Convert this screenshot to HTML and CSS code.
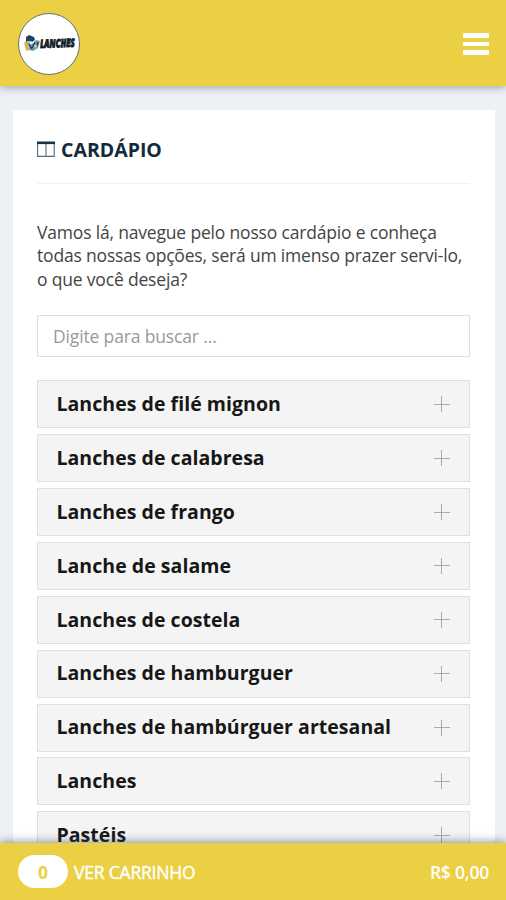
FILE: index.html
```html
<!DOCTYPE html>
<html lang="pt-BR">
<head>
<meta charset="utf-8">
<title>Cardápio</title>
<link rel="stylesheet" href="styles.css">
</head>
<body>
<div class="app">
<header class="header">
  <div class="logo">
    <svg class="mascot" viewBox="0 0 17 19" aria-hidden="true">
      <path d="M1 9 3 7l3 1-1 4 1 4-3 1-1-5z" fill="#d3b34a"/>
      <path d="M3 3 6 1l5 2 1 3-3 2-4-1-2 1z" fill="#174568"/>
      <path d="M5 9l3-2 2 3 3-4 4 1-2 7-5 3-4-1z" fill="#6f9fb8"/>
      <path d="M6 10l3 5M12 8l-3 6M15 8l-1 4" fill="none" stroke="#18384b" stroke-width="1.3"/>
      <circle cx="8" cy="9" r="1.4" fill="#eef4e9"/>
      <circle cx="12.500" cy="12" r="1.2" fill="#e6dfa8"/>
    </svg>
    <span class="logo-name">LANCHES</span>
  </div>
  <div class="menu"><i></i><i></i><i></i></div>
</header>
<main class="card">
  <h1 class="title">
    <svg class="columns" viewBox="0 0 18 16" aria-hidden="true"><path d="M.6 2v13.4h16.600V2M9 2v13" fill="none" stroke="#5c6872" stroke-width="1.1"/><path d="M0 .5h18v2.600H0z" fill="#173347"/></svg>
    <span>CARDÁPIO</span>
  </h1>
  <p class="intro">Vamos lá, navegue pelo nosso cardápio e conheça<br>todas nossas opções, será um imenso prazer servi-lo,<br>o que você deseja?</p>
  <input class="search" type="text" placeholder="Digite para buscar ...">
  <ul class="list">
    <li class="item"><span>Lanches de filé mignon</span><b class="plus"></b></li>
    <li class="item"><span>Lanches de calabresa</span><b class="plus"></b></li>
    <li class="item"><span>Lanches de frango</span><b class="plus"></b></li>
    <li class="item"><span>Lanche de salame</span><b class="plus"></b></li>
    <li class="item"><span>Lanches de costela</span><b class="plus"></b></li>
    <li class="item"><span>Lanches de hamburguer</span><b class="plus"></b></li>
    <li class="item"><span>Lanches de hambúrguer artesanal</span><b class="plus"></b></li>
    <li class="item"><span>Lanches</span><b class="plus"></b></li>
    <li class="item"><span>Pastéis</span><b class="plus"></b></li>
  </ul>
</main>
<footer class="cart">
  <span class="count">0</span>
  <span class="cart-label">VER CARRINHO</span>
  <span class="total">R$ 0,00</span>
</footer>
</div>
</body>
</html>
```
FILE: styles.css
```css
* { box-sizing: border-box; }
body {
  margin: 0;
  font-family: "Open Sans", sans-serif;
}
.app {
  display: flex;
  flex-direction: column;
  height: 900px;
  overflow: hidden;
  background: #edf0f4;
}
.header {
  flex: none;
  display: flex;
  align-items: center;
  justify-content: space-between;
  height: 86px;
  padding: 1px 17px 0 18px;
  background: #ebd044;
  box-shadow: 0 1px 8px rgba(60, 70, 95, .5);
  z-index: 1;
}
.logo {
  display: flex;
  align-items: center;
  width: 62px;
  height: 62px;
  padding-left: 4px;
  border: 1.5px solid #67706b;
  border-radius: 50%;
  background: #fff;
}
.mascot {
  flex: none;
  width: 17px;
  height: 19px;
}
.logo-name {
  font: italic 900 11.5px "Open Sans", sans-serif;
  color: #102027;
  -webkit-text-stroke: .9px #102027;
  transform: rotate(-2deg) scaleX(.68);
  transform-origin: left center;
}
.menu {
  display: flex;
  flex-direction: column;
  gap: 4px;
  padding-top: 1px;
}
.menu i {
  width: 26px;
  height: 4.7px;
  border-radius: 1px;
  background: #fff;
}
.card {
  flex: 1;
  min-height: 0;
  overflow: hidden;
  margin: 24px 11.5px 0 12.5px;
  padding: 0 25px 0 24.5px;
  background: #fff;
}
.title {
  display: flex;
  align-items: center;
  gap: 6px;
  height: 73.5px;
  margin: 0;
  padding-top: 6px;
  border-bottom: 1.5px solid #f0f1f2;
  font-size: 19.5px;
  font-weight: 700;
  color: #142a3a;
}
.columns {
  width: 18px;
  height: 16px;
}
.intro {
  margin: 37.5px 0 23.5px;
  font-size: 17.5px;
  line-height: 23.4px;
  letter-spacing: -.18px;
  color: #444;
  white-space: nowrap;
}
.search {
  display: block;
  width: 100%;
  height: 42px;
  padding: 0 15px;
  border: 1.5px solid #dcdfe2;
  background: #fff;
  font: 17.5px "Open Sans", sans-serif;
  letter-spacing: -.15px;
}
.search::placeholder {
  color: #999;
  opacity: 1;
}
.list {
  display: flex;
  flex-direction: column;
  gap: 5.9px;
  margin: 23.5px 0 0;
  padding: 0;
  list-style: none;
}
.item {
  flex: none;
  display: flex;
  align-items: center;
  justify-content: space-between;
  height: 48px;
  padding: 0 19px 0 18.5px;
  border: 1px solid #dfdfdf;
  background: #f4f4f4;
  font-size: 19.5px;
  font-weight: 700;
  letter-spacing: .04px;
  color: #171717;
  white-space: nowrap;
}
.item span {
  padding-bottom: 1.5px;
}
.plus {
  width: 16px;
  height: 16px;
  background:
    linear-gradient(#aaa, #aaa) center / 16px 1px no-repeat,
    linear-gradient(#aaa, #aaa) center / 1px 16px no-repeat;
}
.cart {
  flex: none;
  display: flex;
  align-items: center;
  height: 57px;
  padding: 0 17px 0 18px;
  background: #ebd044;
  box-shadow: 0 -1px 9px rgba(60, 70, 95, .6);
  font-size: 17.5px;
  letter-spacing: -.2px;
  color: #fff;
  z-index: 1;
}
.count {
  display: grid;
  place-items: center;
  width: 50px;
  height: 33px;
  margin-right: 6px;
  border-radius: 17px;
  background: #fff;
  font-weight: 700;
  color: #ebd044;
}
.cart-label {
  -webkit-text-stroke: .4px #fff;
}
.total {
  margin-left: auto;
  font-weight: 600;
}
```
